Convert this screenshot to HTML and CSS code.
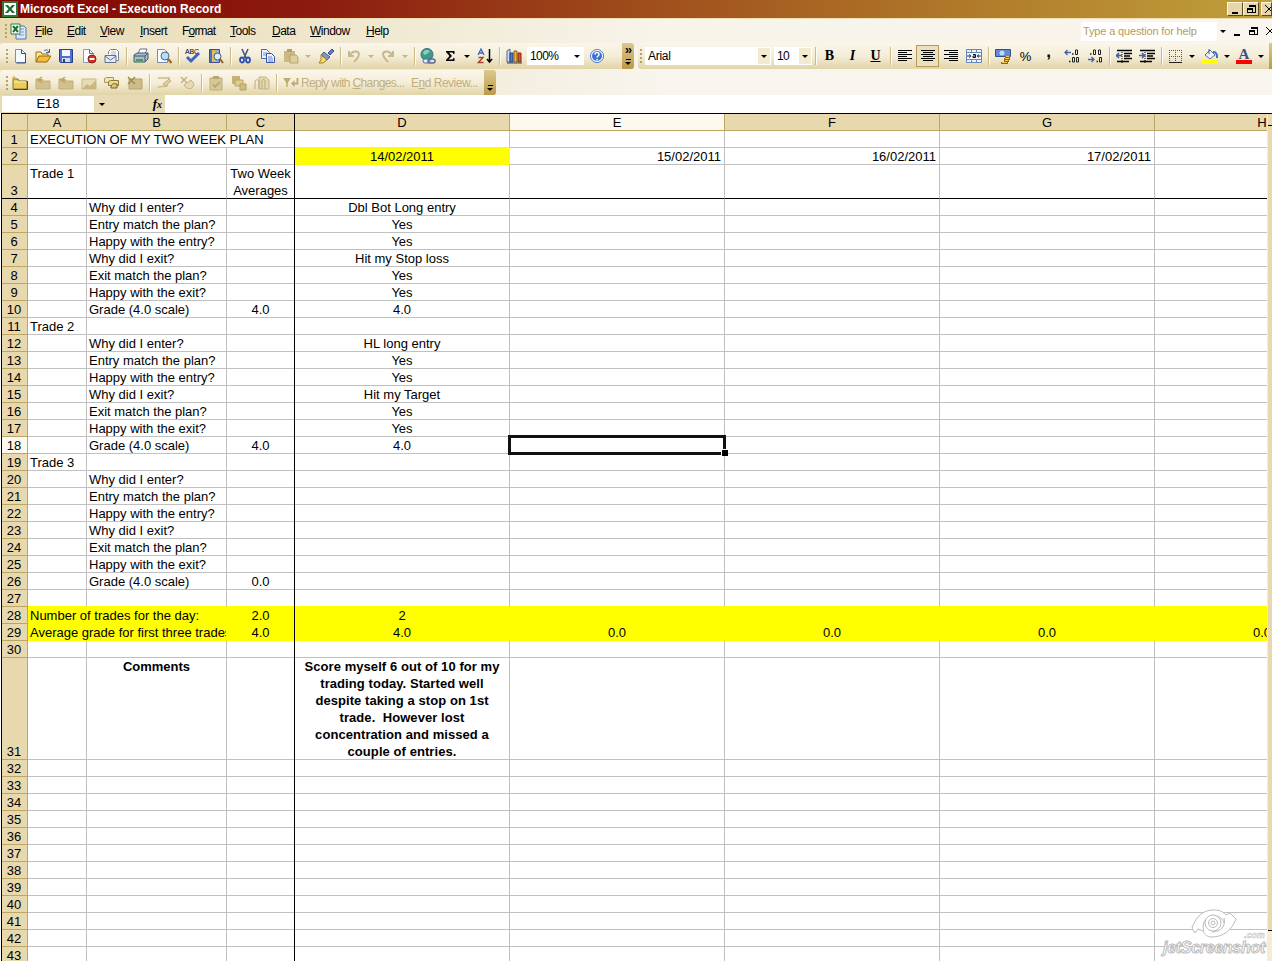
FILE: index.html
```html
<!DOCTYPE html>
<html lang="en">
<head>
  <meta charset="UTF-8">
  <meta name="viewport" content="width=device-width, initial-scale=1">
  <title>Microsoft Excel - Execution Record</title>
  <link rel="stylesheet" href="styles.css">
</head>
<body>

  <svg class="sprite">
    <symbol id="excel" viewBox="0 0 16 16"><path d="M1 1h14v14H1z" fill="#fff" stroke="#2c7a3a" stroke-width="2"/><path d="M3 4h3l2 2.500L10 4h3l-3.500 4L13 12h-3L8 9.500 6 12H3l3.500-4z" fill="#1f7030"/></symbol>
    <symbol id="book" viewBox="0 0 17 17"><path d="M6 3h8l2 2v11H6z" fill="#dbe8fb" stroke="#5573b5"/><path d="M9 6h5M11 9h3M9 12h5" stroke="#7b95cf"/><path d="M1 1h9v10H1z" fill="#fff" stroke="#2c7a3a"/><path d="M3 3l5 6M8 3L3 9" stroke="#1f7030" stroke-width="2"/></symbol>
    <symbol id="new" viewBox="0 0 16 16"><path d="M3.500 1.500h6l4 4v9h-10z" fill="#f6faff" stroke="#7d8db5"/><path d="M9.500 1.500v4h4M13.500 5v10h-9" fill="none" stroke="#33508f"/></symbol>
    <symbol id="open" viewBox="0 0 16 16"><path d="M1 14V4h5l1 2h6v3" fill="#ffe694" stroke="#9a7519"/><path d="M1 14l3-6h12l-4 6z" fill="#f5bd3e" stroke="#96690c"/><path d="M9 3c2-2 4-1 5 1M14.500 1v3.500H11" fill="none" stroke="#445a94"/></symbol>
    <symbol id="save" viewBox="0 0 16 16"><path d="M1.500 1.500h13v13h-12l-1-1z" fill="#506fd0" stroke="#293f8c"/><path d="M4 2h8v6H4z" fill="#f1f5ff"/><path d="M4 10h8v4H4z" fill="#d4dcf2"/><path d="M5 11h2v3H5z" fill="#263c84"/></symbol>
    <symbol id="perm" viewBox="0 0 16 16"><path d="M2.500 1.500h6l4 4v9h-10z" fill="#fbfcff" stroke="#8e9abc"/><path d="M8.500 1.500v4h4" fill="none" stroke="#566892"/><circle cx="11" cy="11" r="4" fill="#d3321f" stroke="#8d1d12"/><path d="M8.500 11h5" stroke="#fff" stroke-width="2"/></symbol>
    <symbol id="mail" viewBox="0 0 16 16"><path d="M4.500 6V3.500l2-2h6l2 2v9h-2" fill="#fff" stroke="#71809c"/><path d="M7 4h5M7 6h5" stroke="#a5aec0"/><path d="M1 7.500h11v7H1z" fill="#e8ebf2" stroke="#5f6f8c"/><path d="M1 8l5.500 4L12 8" fill="none" stroke="#5f6f8c"/></symbol>
    <symbol id="print" viewBox="0 0 16 16"><path d="M5 6l2-5h7l-2 5" fill="#fff" stroke="#63739a"/><path d="M1 7l3-2h11v6l-3 3H1z" fill="#a9bdcb" stroke="#435975"/><path d="M1 8h11l3-3M12 8v6" fill="none" stroke="#435975"/><path d="M3 11h7v2H3z" fill="#3fa351"/></symbol>
    <symbol id="preview" viewBox="0 0 16 16"><path d="M1.500 1.500h7l3 3v10h-10z" fill="#f8fbff" stroke="#7888b0"/><circle cx="9" cy="8" r="4" fill="#b7dcf6" stroke="#536584"/><path d="M12 11l3.500 4" stroke="#a26b24" stroke-width="2.500"/></symbol>
    <symbol id="spell" viewBox="0 0 16 16"><text x="0" y="6" class="abc">ABC</text><path d="M2 9l4 4 8-8" fill="none" stroke="#3f62bd" stroke-width="3"/></symbol>
    <symbol id="research" viewBox="0 0 16 16"><path d="M1 2h3v12H1z" fill="#4c71c3"/><path d="M4 2h3v12H4z" fill="#e0bd57"/><path d="M7 2h4v12H7z" fill="#9cb1df"/><path d="M1.500 1.500h10v13h-10z" fill="none" stroke="#334f91"/><circle cx="9.500" cy="8.500" r="3.500" fill="#ddecfa" stroke="#4b5a74"/><path d="M12 11l3 4" stroke="#8c6028" stroke-width="2"/></symbol>
    <symbol id="cut" viewBox="0 0 16 16"><path d="M5 1l4 9M11 1L7 10" stroke="#44587f" stroke-width="1.600"/><ellipse cx="5" cy="12" rx="2" ry="2.500" fill="none" stroke="#2d4fb5" stroke-width="1.800"/><ellipse cx="11" cy="12" rx="2" ry="2.500" fill="none" stroke="#2d4fb5" stroke-width="1.800"/></symbol>
    <symbol id="copy" viewBox="0 0 16 16"><path d="M1.500 1.500h5l3 3v6h-8z" fill="#eef4ff" stroke="#4a66ae"/><path d="M3 5h4M3 7h4" stroke="#7a92cc"/><path d="M6.500 5.500h5l3 3v6h-8z" fill="#eef4ff" stroke="#3454a5"/><path d="M8 9h4M8 11h5M8 13h5" stroke="#6682c6"/></symbol>
    <symbol id="paste" viewBox="0 0 16 16"><path d="M1 3h11v11H1z" fill="#cbb882"/><path d="M4 1h5v3H4z" fill="#b39f67"/><path d="M7 7h6l2 2v6H7z" fill="#ddcda0" stroke="#b7a36d"/></symbol>
    <symbol id="brush" viewBox="0 0 16 16"><path d="M10 5l4-4 2 2-4 4z" fill="#6a7fc7" stroke="#36498a"/><path d="M6 4l6 5-3 3-6-5z" fill="#8093c9" stroke="#4b5f95"/><path d="M3 7l6 5-4 3H1l2-3z" fill="#f6db70" stroke="#9d812a"/></symbol>
    <symbol id="undo" viewBox="0 0 16 16"><path d="M3 3v5h5M4 7c2-4 8-5 9-1 0 4-3 5-5 8" fill="none" stroke="#c8b98c" stroke-width="2"/></symbol>
    <symbol id="redo" viewBox="0 0 16 16"><path d="M13 3v5H8M12 7C10 3 4 2 3 6c0 4 3 5 5 8" fill="none" stroke="#c8b98c" stroke-width="2"/></symbol>
    <symbol id="link" viewBox="0 0 16 16"><circle cx="7" cy="6.500" r="6" fill="#3c9b8d" stroke="#376c86"/><path d="M3 4c3-3 5-2 7-1L7 6 4 7z" fill="#8bd3ae"/><rect x="3" y="11" width="7" height="4" rx="2" fill="#e6eefc" stroke="#526c9b"/><rect x="8" y="11" width="7" height="4" rx="2" fill="none" stroke="#526c9b" stroke-width="1.500"/></symbol>
    <symbol id="sum" viewBox="0 0 16 16"><path d="M4 3h8.500v3h-1l-1-1.500H7L10 8l-3.500 3.500h4l1-1.500h1v3H4v-1l3.500-4L4 4z" fill="#000"/></symbol>
    <symbol id="sort" viewBox="0 0 16 16"><path d="M1 7l3-6 3 6M2 5h4" fill="none" stroke="#4367b5" stroke-width="1.300"/><path d="M1.500 9.500H6l-4.500 5h5" fill="none" stroke="#a8432a" stroke-width="1.400"/><path d="M12.500 1v12M10 11l2.500 3 2.500-3" fill="none" stroke="#000" stroke-width="1.500"/></symbol>
    <symbol id="chart" viewBox="0 0 16 16"><path d="M1 3l3-2v13H1z" fill="#d6e1f5" stroke="#4d618d"/><path d="M4 5h3v9H4z" fill="#4e7ad1" stroke="#233f83"/><path d="M8 3h3v11H8z" fill="#f2b837" stroke="#885f13"/><path d="M12 5h3v9h-3z" fill="#d9542f" stroke="#842714"/><path d="M1 15h15" stroke="#30466f"/></symbol>
    <symbol id="help" viewBox="0 0 16 16"><circle cx="8" cy="8" r="6.500" fill="#fff" stroke="#4d78cc"/><circle cx="8" cy="8" r="5" fill="#3e70d2"/><path d="M6 6.500c0-3 4-2.500 4 0C10 8 8 8 8 9.500M8 11v1.500" fill="none" stroke="#fff" stroke-width="1.500"/></symbol>
    <symbol id="left" viewBox="0 0 16 16"><path d="M1 2.500h14M1 4.500h9M1 6.500h14M1 8.500h9M1 10.500h14M1 12.500h9" stroke="#000"/></symbol>
    <symbol id="center" viewBox="0 0 16 16"><path d="M1 2.500h14M3 4.500h10M1 6.500h14M3 8.500h10M1 10.500h14M3 12.500h10" stroke="#000"/></symbol>
    <symbol id="right" viewBox="0 0 16 16"><path d="M1 2.500h14M6 4.500h9M1 6.500h14M6 8.500h9M1 10.500h14M6 12.500h9" stroke="#000"/></symbol>
    <symbol id="merge" viewBox="0 0 16 16"><path d="M.5 1.500h15v13H.5zM.5 4.500h15M.5 11.500h15M5.500 1.500v3M10.500 1.500v3M5.500 11.500v3M10.500 11.500v3" fill="#eff4fc" stroke="#6687b7"/><path d="M1 8h4M11 8h4M3 6.500L5 8 3 9.500M13 6.500L11 8l2 1.500" fill="none" stroke="#263f73"/><path d="M7 6.500h2.500v3H7V8h2.500" fill="none" stroke="#111"/></symbol>
    <symbol id="currency" viewBox="0 0 16 16"><path d="M.5 1.500h15v7H.5z" fill="#618bd5" stroke="#344f91"/><circle cx="7" cy="5" r="2.500" fill="#c5d9f6"/><path d="M10 9h5M9 11h6M9 13h5M6 15h7" stroke="#9b641b" stroke-width="2"/><path d="M11 8.500h3M10 10.500h4M10 12.500h3M7 14.500h5" stroke="#f3c34a"/></symbol>
    <symbol id="inc" viewBox="0 0 16 16"><path d="M1 4.500h6M3.500 2L1 4.500 3.500 7" fill="none" stroke="#4263aa" stroke-width="1.300"/><path d="M8 6h1.500" stroke="#222" stroke-width="1.500"/><path d="M11.500 2h2v4.500h-2zM8.500 9.500h2V14h-2zM12.500 9.500h2V14h-2z" fill="none" stroke="#222"/><path d="M5 13.500h1.500" stroke="#222" stroke-width="1.500"/></symbol>
    <symbol id="dec" viewBox="0 0 16 16"><path d="M1 11.500h6M4.500 9L7 11.500 4.500 14" fill="none" stroke="#4263aa" stroke-width="1.300"/><path d="M3 6h1.500M9.500 13.500H11" stroke="#222" stroke-width="1.500"/><path d="M6.500 2h2v4.500h-2zM11.500 2h2v4.500h-2zM12.500 9.500h2V14h-2z" fill="none" stroke="#222"/></symbol>
    <symbol id="outdent" viewBox="0 0 16 16"><path d="M1 2.500h15M8 5.500h8M8 8h6M8 10.500h8M1 13.500h12" stroke="#000" stroke-width="1.500"/><path d="M6 2v13" stroke="#000" stroke-dasharray="1 1"/><path d="M0 7.500h6M3 5L.5 7.500 3 10" fill="none" stroke="#3d60ae" stroke-width="1.600"/></symbol>
    <symbol id="indent" viewBox="0 0 16 16"><path d="M1 2.500h15M8 5.500h8M8 8h6M8 10.500h8M1 13.500h12" stroke="#000" stroke-width="1.500"/><path d="M6 2v13" stroke="#000" stroke-dasharray="1 1"/><path d="M0 7.500h6M3 5l2.500 2.500L3 10" fill="none" stroke="#3d60ae" stroke-width="1.600"/></symbol>
    <symbol id="borders" viewBox="0 0 16 16"><path d="M2 2.500h13M2 8.500h13M2.500 2v12M8.500 2v12M14.500 2v12" stroke="#555" stroke-dasharray="1 1"/><path d="M2 14.500h13" stroke="#222"/></symbol>
    <symbol id="fill" viewBox="0 0 16 16"><path d="M3 7l5-5 5 5-5 4z" fill="#e9f1fd" stroke="#57719f"/><path d="M7 6V1" stroke="#465c85"/><path d="M11 4c4 0 4 3 4 6" fill="none" stroke="#3e6bc0" stroke-width="2"/><path d="M0 12h16v4H0z" fill="#ff0"/></symbol>
    <symbol id="fontcolor" viewBox="0 0 16 16"><text x="8" y="11" class="glyph-a">A</text><path d="M0 12h16v4H0z" fill="#f00"/></symbol>
    <symbol id="folder" viewBox="0 0 16 16"><path d="M1 14V4h5l1 2h8v8z" fill="#ebcc58" stroke="#84722a"/><path d="M2 7h12" stroke="#fff2b0"/><path d="M1.500 14.500h14V6" fill="none" stroke="#4e4521"/><path d="M2 1v4M0 3h4" stroke="#d2a929"/></symbol>
    <symbol id="gfolder" viewBox="0 0 16 16"><path d="M1 14V4h5l1 2h8v8z" fill="#d2c18f" stroke="#c2af77"/><path d="M7 8l-4-3 4-3M3 5h5" fill="none" stroke="#bca768" stroke-width="1.500"/></symbol>
    <symbol id="gimage" viewBox="0 0 16 16"><path d="M1 4h14v10H1z" fill="#e8dcb8" stroke="#ccb985"/><path d="M1 14l5-5 3 2 6-6v9z" fill="#cab780"/></symbol>
    <symbol id="cards" viewBox="0 0 16 16"><path d="M.5 3.500l2-1h7v5h-9z" fill="#f1e6bb" stroke="#aa985a"/><path d="M4.500 6.500l2-1h8v5h-10z" fill="#ecd994" stroke="#8d7b3d"/><path d="M7 13c0-4 2-5 6-4v4z" fill="#e5ca6e" stroke="#6d5f31"/></symbol>
    <symbol id="gx" viewBox="0 0 16 16"><path d="M2 4h13v10H2z" fill="#cebd8a" stroke="#b6a46d"/><path d="M1 2l7 7M8 2L1 9" stroke="#a08b50" stroke-width="1.500"/></symbol>
    <symbol id="gpen" viewBox="0 0 16 16"><path d="M2 3h12M2 13c2-4 7 1 10-3" fill="none" stroke="#cdbc8b" stroke-width="1.500"/><path d="M7 9l6-5 2 2-6 5z" fill="#dfcfa2" stroke="#c2af79"/></symbol>
    <symbol id="gcross" viewBox="0 0 16 16"><path d="M2 2l6 6M8 2L2 8" stroke="#c4b27f" stroke-width="1.500"/><path d="M5 10l7-5 3 4c-1 6-7 6-10 1z" fill="#e6dab8" stroke="#c4b27f"/></symbol>
    <symbol id="gclip" viewBox="0 0 16 16"><path d="M2 3h12v12H2z" fill="#d7c899" stroke="#c0ad76"/><path d="M5 1h6v3H5z" fill="#b9a66d"/><path d="M5 9l2 3 5-5" fill="none" stroke="#b7a36a" stroke-width="1.500"/></symbol>
    <symbol id="gstack" viewBox="0 0 16 16"><path d="M1 1h8v8H1z" fill="#c6b274"/><path d="M4 5h8v6H4z" fill="#dfcd91" stroke="#baa464"/><path d="M9 9h6v6H9z" fill="#cfbc80" stroke="#b49f61"/></symbol>
    <symbol id="gattach" viewBox="0 0 16 16"><path d="M5 2h7l3 3v9H5z" fill="#e5d9b4" stroke="#c5b483"/><path d="M1 14V7c0-3 4-3 4 0v7M8 14V6c0-2 3-2 3 0v8" fill="none" stroke="#bba975"/></symbol>
    <symbol id="reply" viewBox="0 0 18 16"><path d="M1 3h8L5 9z" fill="#c0ac70"/><path d="M5 5v7" stroke="#c0ac70" stroke-width="1.500"/><path d="M15.500 3v5.500H11" fill="none" stroke="#bfab70" stroke-width="2"/><path d="M9 8.500L12.500 5v7z" fill="#bfab70"/></symbol>
  </svg>

  <div class="titlebar">
    <svg class="ico"><use href="#excel"/></svg>
    <span class="caption">Microsoft Excel - Execution Record</span>
    <span class="winbtn"><i class="min"></i></span>
    <span class="winbtn"><i class="restore"></i></span>
    <span class="winbtn last"><i class="x"></i></span>
  </div>

  <div class="menubar">
    <i class="grip"></i>
    <svg class="ico book"><use href="#book"/></svg>
    <span class="menu m-file"><u>F</u>ile</span>
    <span class="menu m-edit"><u>E</u>dit</span>
    <span class="menu m-view"><u>V</u>iew</span>
    <span class="menu m-insert"><u>I</u>nsert</span>
    <span class="menu m-format">F<u>o</u>rmat</span>
    <span class="menu m-tools"><u>T</u>ools</span>
    <span class="menu m-data"><u>D</u>ata</span>
    <span class="menu m-window"><u>W</u>indow</span>
    <span class="menu"><u>H</u>elp</span>
    <span class="ask">Type a question for help</span>
    <i class="arrow"></i>
    <span class="mdibtn"><i class="min"></i></span>
    <span class="mdibtn"><i class="restore"></i></span>
    <span class="mdibtn"><i class="x"></i></span>
  </div>

  <div class="toolrow">
    <div class="toolbar standard">
      <i class="grip"></i>
      <span class="btn"><svg class="ico"><use href="#new"/></svg></span>
      <span class="btn"><svg class="ico"><use href="#open"/></svg></span>
      <span class="btn"><svg class="ico"><use href="#save"/></svg></span>
      <span class="btn"><svg class="ico"><use href="#perm"/></svg></span>
      <span class="btn"><svg class="ico"><use href="#mail"/></svg></span>
      <i class="sep"></i>
      <span class="btn"><svg class="ico"><use href="#print"/></svg></span>
      <span class="btn"><svg class="ico"><use href="#preview"/></svg></span>
      <i class="sep"></i>
      <span class="btn"><svg class="ico"><use href="#spell"/></svg></span>
      <span class="btn"><svg class="ico"><use href="#research"/></svg></span>
      <i class="sep"></i>
      <span class="btn"><svg class="ico"><use href="#cut"/></svg></span>
      <span class="btn"><svg class="ico"><use href="#copy"/></svg></span>
      <span class="btn"><svg class="ico"><use href="#paste"/></svg></span>
      <i class="arrow off"></i>
      <span class="btn"><svg class="ico"><use href="#brush"/></svg></span>
      <i class="sep"></i>
      <span class="btn slim"><svg class="ico"><use href="#undo"/></svg></span>
      <i class="arrow off"></i>
      <span class="btn slim"><svg class="ico"><use href="#redo"/></svg></span>
      <i class="arrow off"></i>
      <i class="sep"></i>
      <span class="btn slim"><svg class="ico"><use href="#link"/></svg></span>
      <span class="btn slim"><svg class="ico"><use href="#sum"/></svg></span>
      <i class="arrow"></i>
      <span class="btn"><svg class="ico"><use href="#sort"/></svg></span>
      <i class="sep"></i>
      <span class="btn"><svg class="ico"><use href="#chart"/></svg></span>
      <span class="combo zoom">100%<i class="arrow"></i></span>
      <span class="btn"><svg class="ico"><use href="#help"/></svg></span>
      <span class="more"><b>&rsaquo;&rsaquo;</b><i class="arrow"></i></span>
    </div>

    <div class="toolbar formatting">
      <i class="grip"></i>
      <span class="combo font">Arial<i class="arrow"></i></span>
      <span class="combo size">10<i class="arrow"></i></span>
      <i class="sep"></i>
      <span class="btn letter"><b>B</b></span>
      <span class="btn letter"><em>I</em></span>
      <span class="btn letter"><u>U</u></span>
      <i class="sep"></i>
      <span class="btn"><svg class="ico"><use href="#left"/></svg></span>
      <span class="btn active"><svg class="ico"><use href="#center"/></svg></span>
      <span class="btn"><svg class="ico"><use href="#right"/></svg></span>
      <span class="btn"><svg class="ico"><use href="#merge"/></svg></span>
      <i class="sep"></i>
      <span class="btn"><svg class="ico"><use href="#currency"/></svg></span>
      <span class="btn percent">%</span>
      <span class="btn comma">,</span>
      <span class="btn"><svg class="ico"><use href="#inc"/></svg></span>
      <span class="btn"><svg class="ico"><use href="#dec"/></svg></span>
      <i class="sep"></i>
      <span class="btn"><svg class="ico"><use href="#outdent"/></svg></span>
      <span class="btn"><svg class="ico"><use href="#indent"/></svg></span>
      <i class="sep"></i>
      <span class="btn slim"><svg class="ico"><use href="#borders"/></svg></span>
      <i class="arrow"></i>
      <span class="btn"><svg class="ico"><use href="#fill"/></svg></span>
      <i class="arrow"></i>
      <span class="btn slim"><svg class="ico"><use href="#fontcolor"/></svg></span>
      <i class="arrow"></i>
      <span class="more"></span>
    </div>
  </div>

  <div class="toolrow second">
    <div class="toolbar review">
      <i class="grip"></i>
      <span class="btn"><svg class="ico"><use href="#folder"/></svg></span>
      <span class="btn"><svg class="ico"><use href="#gfolder"/></svg></span>
      <span class="btn"><svg class="ico"><use href="#gfolder"/></svg></span>
      <span class="btn"><svg class="ico"><use href="#gimage"/></svg></span>
      <span class="btn"><svg class="ico"><use href="#cards"/></svg></span>
      <span class="btn"><svg class="ico"><use href="#gx"/></svg></span>
      <i class="sep"></i>
      <span class="btn"><svg class="ico"><use href="#gpen"/></svg></span>
      <span class="btn"><svg class="ico"><use href="#gcross"/></svg></span>
      <i class="sep"></i>
      <span class="btn"><svg class="ico"><use href="#gclip"/></svg></span>
      <span class="btn"><svg class="ico"><use href="#gstack"/></svg></span>
      <span class="btn"><svg class="ico"><use href="#gattach"/></svg></span>
      <i class="sep"></i>
      <svg class="ico reply"><use href="#reply"/></svg>
      <span class="label reply-text">Reply with <u>C</u>hanges...</span>
      <span class="label">E<u>n</u>d Review...</span>
      <span class="more"><i class="arrow"></i></span>
    </div>
  </div>

  <div class="formulabar">
    <span class="namebox">E18</span>
    <i class="arrow"></i>
    <span class="fx">f<small>x</small></span>
    <span class="formula"></span>
  </div>

  <div class="workbook">
    <div class="sheet" id="sheet"></div>
    <div class="scrollbar">
      <i class="split"></i>
      <i class="thumb-end"></i>
    </div>
  </div>

  <div class="watermark">
    <svg viewBox="0 0 48 32"><path d="M2 20C6 8 14 1 26 2c5 0 8 3 10 5l4-2 6 6c-4 11-13 18-24 18-5 0-7-2-9-6l-5-2-3 4zM14 23c-3-8 2-15 10-15 6 0 9 3 10 7M34 10c2 8-3 14-12 14"/><circle cx="23" cy="15" r="8"/><circle cx="23" cy="15" r="4.500"/><circle cx="23" cy="15" r="2"/></svg>
    <span class="com">.com</span>
    <span class="mark">jetScreenshot</span>
  </div>

  <script src="sheet.js"></script>
</body>
</html>
```
FILE: styles.css
```css
* {
  box-sizing: border-box;
  margin: 0;
  padding: 0;
}

body {
  position: relative;
  width: 1272px;
  height: 961px;
  overflow: hidden;
  background: #fff;
  font-family: "Liberation Sans", Arial, sans-serif;
  font-size: 12px;
  color: #000;
}

.sprite {
  display: none;
}

.ico {
  width: 16px;
  height: 16px;
  flex: none;
}

.abc {
  font-size: 7px;
  letter-spacing: -0.2px;
}

.glyph-a {
  font: bold 15px "Liberation Serif", serif;
  fill: #3b5185;
  text-anchor: middle;
}

/* Title bar */
.titlebar {
  display: flex;
  align-items: center;
  height: 18px;
  padding-left: 2px;
  background: linear-gradient(90deg, #830500, #8c1c0f 25%, #a0501c 52%, #b07a2a 76%, #c0a03a);
}

.caption {
  flex: 1;
  margin-left: 2px;
  color: #fff;
  font-size: 12px;
  font-weight: bold;
}

.winbtn {
  display: flex;
  align-items: center;
  justify-content: center;
  width: 16px;
  height: 14px;
  background: #e6d6aa;
  border: 1px solid;
  border-color: #fff8e0 #594b25 #594b25 #fff8e0;
}

.winbtn.last {
  width: 11px;
  margin-left: 2px;
  overflow: hidden;
  justify-content: flex-start;
  padding-left: 3px;
}

.min {
  width: 6px;
  height: 2px;
  margin-top: 7px;
  background: #000;
}

.restore {
  position: relative;
  width: 6px;
  height: 5px;
  margin: 3px 2px 0 0;
  border: 1px solid #000;
  border-top-width: 2px;
}

.restore::before {
  content: "";
  position: absolute;
  left: 1px;
  top: -5px;
  width: 6px;
  height: 5px;
  border: 1px solid #000;
  border-top-width: 2px;
  border-left: 0;
}

.x {
  flex: none;
  width: 8px;
  height: 8px;
  background:
    linear-gradient(45deg, transparent 44%, #000 44%, #000 56%, transparent 56%),
    linear-gradient(-45deg, transparent 44%, #000 44%, #000 56%, transparent 56%);
}

/* Menu bar */
.menubar {
  display: flex;
  align-items: center;
  height: 25px;
  padding-left: 5px;
  background: linear-gradient(90deg, #e7d9b1, #f7f4ea 52%, #f9f5ee);
  border-top: 1px solid #f0dfb2;
}

.grip {
  flex: none;
  width: 2px;
  height: 14px;
  background: repeating-linear-gradient(#b7a169 0 2px, transparent 2px 4px);
}

.book {
  width: 17px;
  height: 17px;
  margin: 0 8px 0 3px;
}

.menu {
  letter-spacing: -0.5px;
  white-space: nowrap;
}

.m-file { width: 32px; }
.m-edit { width: 33px; }
.m-view { width: 40px; }
.m-insert { width: 42px; }
.m-format { width: 48px; letter-spacing: -0.8px; }
.m-tools { width: 42px; }
.m-data { width: 38px; }
.m-window { width: 56px; }

.ask {
  width: 136px;
  height: 19px;
  margin-left: auto;
  padding-left: 2px;
  line-height: 18px;
  background: #fff;
  color: #b89b5b;
  font-size: 11px;
  letter-spacing: -0.15px;
}

.arrow {
  display: flex;
  justify-content: center;
  flex: none;
  width: 12px;
}

.arrow::before {
  content: "";
  border: 3px solid transparent;
  border-top-color: #000;
  border-bottom: 0;
}

.arrow.off::before {
  border-top-color: #c5b381;
}

.mdibtn {
  display: flex;
  align-items: center;
  justify-content: center;
  width: 16px;
  height: 14px;
}

.mdibtn:last-child {
  width: 11px;
  overflow: hidden;
  justify-content: flex-start;
  padding-left: 5px;
}

/* Toolbars */
.toolrow {
  display: flex;
  height: 27px;
  background: linear-gradient(90deg, #e7d9b1, #f8f5ee 52%);
}

.toolbar {
  display: flex;
  align-items: center;
  height: 26px;
  padding-left: 6px;
  background: linear-gradient(#faf6ea, #f4edd8 50%, #e2d4a8);
  border-radius: 3px;
}

.standard {
  width: 634px;
}

.formatting {
  width: 634px;
  margin-left: 4px;
  padding-left: 2px;
}

.toolrow.second {
  height: 25px;
}

.review {
  width: 496px;
  height: 25px;
}

.btn {
  display: flex;
  align-items: center;
  justify-content: center;
  flex: none;
  width: 23px;
  height: 22px;
}

.btn.slim {
  width: 22px;
}

.btn.active {
  border: 1px solid #b59a5b;
  background: #ece1bd;
}

.sep {
  flex: none;
  width: 6px;
  height: 18px;
  border-left: 3px solid transparent;
  background: linear-gradient(90deg, #cbbb8b 1px, #fffdf3 1px 2px, transparent 2px);
  background-clip: padding-box;
}

.combo {
  display: flex;
  align-items: center;
  justify-content: space-between;
  flex: none;
  height: 18px;
  padding-left: 3px;
  background: #fff;
  letter-spacing: -0.6px;
}

.combo .arrow {
  height: 16px;
  align-items: center;
  margin-right: 1px;
  background: #f3ead2;
}

.zoom {
  width: 57px;
  margin: 0 1px 0 2px;
}

.zoom .arrow {
  background: #fff;
}

.font {
  width: 126px;
  margin: 0 3px;
}

.font {
  letter-spacing: -0.3px;
}

.size {
  width: 38px;
}

.more {
  display: flex;
  flex-direction: column;
  align-items: center;
  justify-content: space-between;
  align-self: stretch;
  width: 12px;
  margin-left: auto;
  padding: 2px 0 4px;
  background: linear-gradient(#dcc98e, #bb9a48);
  border-radius: 0 3px 3px 0;
  line-height: 10px;
}

.more b {
  letter-spacing: -1px;
}

.more .arrow {
  padding-top: 2px;
  border-top: 1px solid #000;
  width: 5px;
  margin-top: auto;
}

.formatting .more {
  width: 3px;
  border-radius: 0;
}

.letter {
  font-family: "Liberation Serif", "Times New Roman", serif;
  font-size: 14px;
  font-weight: bold;
}

.percent {
  font-size: 13px;
}

.comma {
  padding-bottom: 8px;
  font-size: 17px;
  font-weight: bold;
}

.reply {
  width: 18px;
  margin-left: 3px;
}

.label {
  color: #c1ae7c;
  font-size: 12px;
  letter-spacing: -0.5px;
  white-space: nowrap;
}

.reply-text {
  width: 110px;
  margin-left: 1px;
  letter-spacing: -0.65px;
}

/* Formula bar */
.formulabar {
  display: flex;
  align-items: center;
  height: 18px;
  padding-left: 2px;
  background: #e8dab4;
}

.namebox {
  width: 92px;
  height: 16px;
  line-height: 16px;
  background: #fff;
  text-align: center;
  font-size: 13px;
}

.formulabar .arrow {
  width: 15px;
}

.fx {
  width: 56px;
  padding-right: 3px;
  text-align: right;
  font: italic bold 13px/16px "Liberation Serif", serif;
}

.fx small {
  font-size: 10px;
}

.formula {
  flex: 1;
  align-self: stretch;
  background: #fff;
}

/* Sheet */
.workbook {
  display: flex;
  height: 848px;
  margin-left: 1px;
  border-top: 1px solid #000;
  border-left: 1px solid #000;
}

.sheet {
  width: 1265px;
  overflow: hidden;
  font-size: 13px;
  line-height: 17px;
}

.row {
  display: flex;
  width: 1400px;
  height: 17px;
}

.cell {
  position: relative;
  flex: none;
  width: 215px;
  padding: 0 2px;
  border-right: 1px solid #c0c0c0;
  border-bottom: 1px solid #c0c0c0;
  white-space: nowrap;
}

.cell.a { width: 59px; }
.cell.b { width: 140px; }
.cell.c { width: 68px; text-align: center; }
.cell.ab { width: 199px; overflow: hidden; padding-right: 0; }
.cell.abc-wide { width: 267px; }
.cell.d, .cell.e, .cell.f, .cell.g, .cell.h { text-align: center; }

/* Freeze pane line right of column C */
.cell.c::after, .cell.abc-wide::after {
  content: "";
  position: absolute;
  top: 0;
  right: -1px;
  bottom: -1px;
  width: 1px;
  background: #000;
}

.cell.rowhead {
  display: flex;
  align-items: flex-end;
  justify-content: center;
  width: 26px;
  padding: 0 1px 0 0;
  line-height: 15px;
  background: #e8d8ae;
  border-color: #bba763;
}

.row.heads .cell {
  background: #e8d8ae;
  border-color: #bba763;
  text-align: center;
}

.row.heads .cell.e, .cell.rowhead.current { background: #fdf9ee; }

.row.r3 { height: 34px; }
.row.r3 .cell { border-bottom-color: #000; }
.row.r3 .c { padding: 0; white-space: normal; }
.row.r31 { height: 102px; }
.row.r31 .cell:not(.rowhead) { font-weight: bold; text-align: center; }
.row.r31 .d { white-space: pre; letter-spacing: 0.07px; }

.row.r2 .d { background: #ff0; border-color: #ff0; box-shadow: 0 -1px #ff0; }
.row.r2 .e, .row.r2 .f, .row.r2 .g { text-align: right; padding-right: 3px; }

.row.r27 .cell:not(.rowhead) { border-bottom-color: #ff0; }
.row.r28 .cell:not(.rowhead), .row.r29 .cell:not(.rowhead) {
  background: #ff0;
  border-bottom-color: #ff0;
  border-right-color: #ff0;
}

.selection {
  position: absolute;
  left: -2px;
  top: -2px;
  width: 218px;
  height: 20px;
  border: 3px solid #111;
  z-index: 1;
}

.selection::after {
  content: "";
  position: absolute;
  right: -5px;
  bottom: -4px;
  width: 6px;
  height: 6px;
  background: #000;
  border: 1px solid #fff;
  border-right: 0;
  border-bottom: 0;
}

.scrollbar {
  display: flex;
  flex-direction: column;
  justify-content: space-between;
  flex: 1;
  background: #e8d8ae;
  border-left: 1px solid #f6edcf;
}

.split {
  height: 12px;
  border-bottom: 1px solid #000;
}

.thumb-end {
  height: 31px;
  background: #f5ecd2;
  border-top: 1px solid #000;
}

/* Watermark */
.watermark {
  position: absolute;
  left: 1162px;
  top: 908px;
  width: 110px;
  height: 53px;
  color: #fff;
}

.watermark svg {
  position: absolute;
  left: 28px;
  top: 0;
  width: 48px;
  height: 32px;
  fill: #fff;
  stroke: #bbb;
}

.mark, .com {
  position: absolute;
  font-weight: bold;
  font-style: italic;
  line-height: 1;
  -webkit-text-stroke: 1px #bdbdbd;
}

.mark {
  left: 1px;
  top: 32px;
  font-size: 16px;
  letter-spacing: -0.3px;
}

.com {
  left: 82px;
  top: 23px;
  font-size: 9px;
  -webkit-text-stroke-width: 0.5px;
}
```
FILE: sheet.js
```js
const sheet = document.getElementById('sheet');
const cols = ['a', 'b', 'c', 'd', 'e', 'f', 'g', 'h'];
const questions = [
  'Why did I enter?',
  'Entry match the plan?',
  'Happy with the entry?',
  'Why did I exit?',
  'Exit match the plan?',
  'Happy with the exit?',
  'Grade (4.0 scale)'
];

const data = {
  1: { a: 'EXECUTION OF MY TWO WEEK PLAN' },
  2: { d: '14/02/2011', e: '15/02/2011', f: '16/02/2011', g: '17/02/2011' },
  3: { a: 'Trade 1', c: 'Two Week Averages' },
  11: { a: 'Trade 2' },
  19: { a: 'Trade 3' },
  28: { a: 'Number of trades for the day:', c: '2.0', d: '2' },
  29: { a: 'Average grade for first three trades', c: '4.0', d: '4.0', e: '0.0', f: '0.0', g: '0.0', h: '0.0' },
  31: {
    b: 'Comments',
    d: 'Score myself 6 out of 10 for my\ntrading today. Started well\ndespite taking a stop on 1st\ntrade.  However lost\nconcentration and missed a\ncouple of entries.'
  }
};

// One block of questions per trade
function addTrade(start, answers, average) {
  questions.forEach((question, i) => {
    data[start + i] = { b: question, d: answers[i] || '' };
  });
  data[start + 6].c = average;
}

addTrade(4, ['Dbl Bot Long entry', 'Yes', 'Yes', 'Hit my Stop loss', 'Yes', 'Yes', '4.0'], '4.0');
addTrade(12, ['HL long entry', 'Yes', 'Yes', 'Hit my Target', 'Yes', 'Yes', '4.0'], '4.0');
addTrade(20, [], '0.0');

function addCell(row, className, text) {
  const cell = document.createElement('div');
  cell.className = 'cell ' + className;
  cell.textContent = text || '';
  row.appendChild(cell);
  return cell;
}

function addRow(className) {
  const row = document.createElement('div');
  row.className = 'row ' + className;
  sheet.appendChild(row);
  return row;
}

// Column headings
const heads = addRow('heads');
addCell(heads, 'rowhead', '');
cols.forEach(col => addCell(heads, col, col.toUpperCase()));

for (let n = 1; n <= 43; n++) {
  const row = addRow('r' + n);
  const values = data[n] || {};
  addCell(row, n === 18 ? 'rowhead current' : 'rowhead', n);

  // Long text in column A runs over the cells to its right
  let first = 0;
  if (n === 1) {
    addCell(row, 'abc-wide', values.a);
    first = 3;
  } else if (n === 28 || n === 29) {
    addCell(row, 'ab', values.a);
    first = 2;
  }

  cols.slice(first).forEach(col => {
    const cell = addCell(row, col, values[col]);
    if (n === 18 && col === 'e') {
      const selection = document.createElement('div');
      selection.className = 'selection';
      cell.appendChild(selection);
    }
  });
}
```
